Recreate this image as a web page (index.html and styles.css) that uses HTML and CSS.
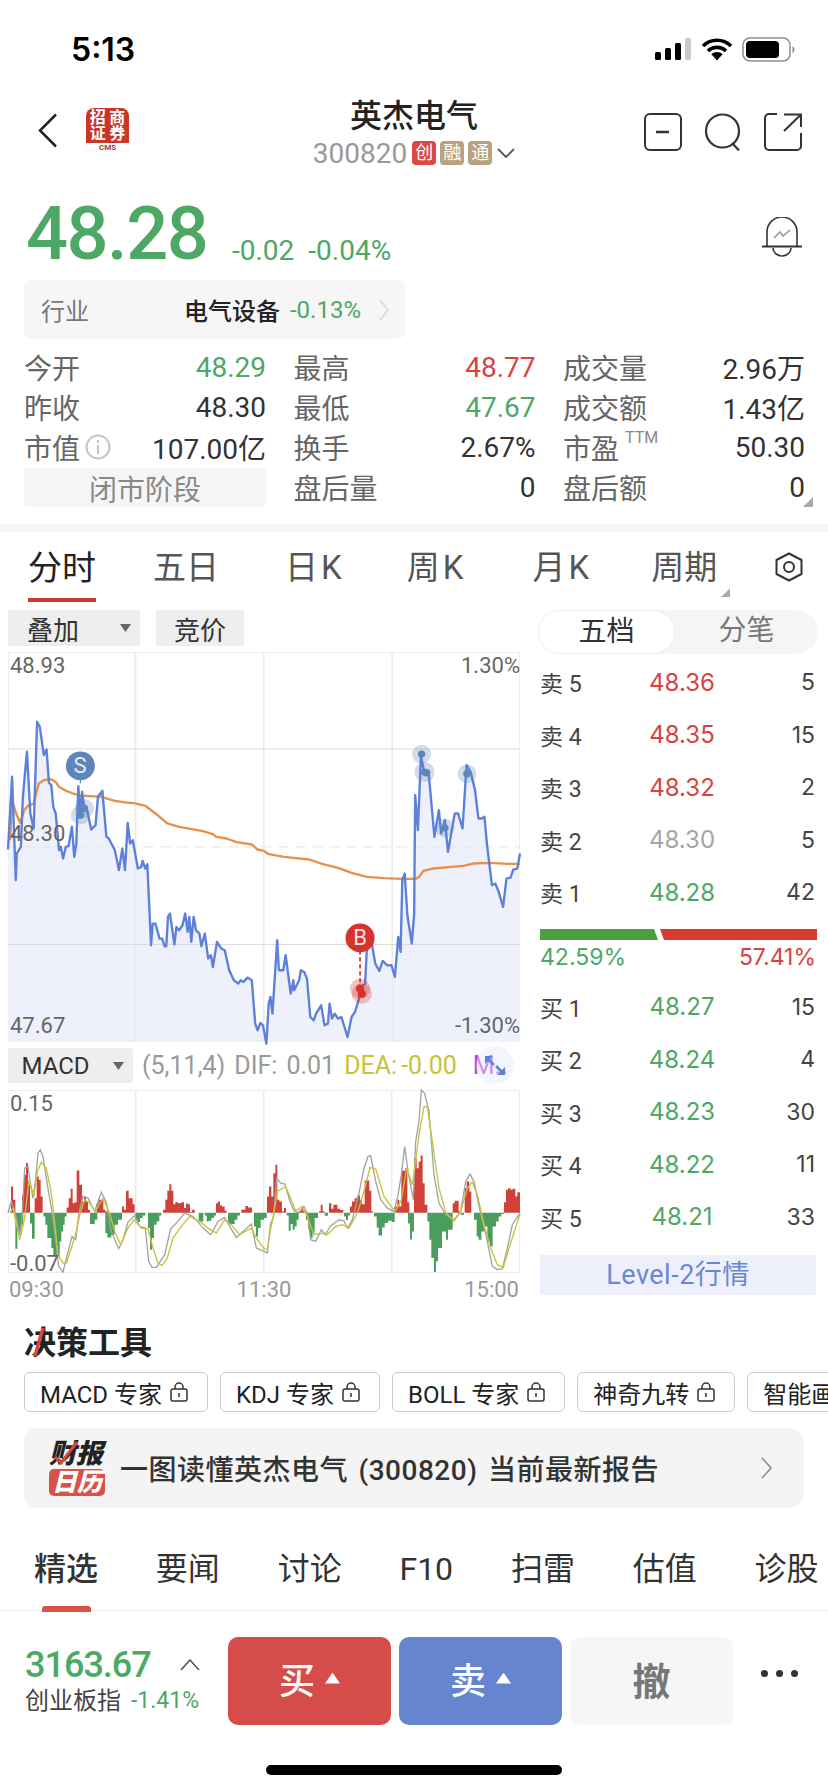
FILE: index.html
```html
<!DOCTYPE html>
<html lang="zh">
<head>
    <meta charset="utf-8">
    <title>英杰电气</title>
    <link rel="stylesheet" href="styles.css">
</head>
<body>
<div class="phone">
    <div class="statusbar">
        <span class="clock">5:13</span>
        <div class="status-icons">
            <svg width="38" height="24" viewBox="0 0 38 24"><rect x="1" y="15" width="6" height="8" rx="1.5" fill="#000"/><rect x="11" y="11" width="6" height="12" rx="1.5" fill="#000"/><rect x="21" y="6" width="6" height="17" rx="1.5" fill="#000"/><rect x="31" y="1" width="6" height="22" rx="1.5" fill="#c9c9c9"/></svg>
            <svg width="32" height="24" viewBox="0 0 32 24"><path d="M2 9a20 20 0 0 1 28 0M7 14a13 13 0 0 1 18 0M11.500 18.500a6.500 6.500 0 0 1 9 0" fill="none" stroke="#000" stroke-width="3.600"/><path d="M12.500 19.500L16 23.500L19.500 19.500a5 5 0 0 0-7 0z" fill="#000"/></svg>
            <svg width="54" height="25" viewBox="0 0 54 25"><rect x="1" y="1" width="47" height="23" rx="7" fill="none" stroke="#8e8e8e" stroke-width="1.500"/><rect x="4" y="4" width="33" height="17" rx="4" fill="#000"/><path d="M50.500 9v7a4 4 0 0 0 0-7z" fill="#8e8e8e"/></svg>
        </div>
    </div>

    <div class="nav">
        <div class="nav-left">
            <svg class="back" width="20" height="35" viewBox="0 0 20 35"><path d="M18 1.500L2 17.500L18 33.500" fill="none" stroke="#222" stroke-width="2.500"/></svg>
            <div class="broker">
                <div class="broker-top"><span>招</span><span>商</span><span>证</span><span>券</span></div>
                <div class="broker-foot">CMS</div>
            </div>
        </div>
        <div class="nav-title">
            <div class="stock-name">英杰电气</div>
            <div class="stock-code">300820<span class="tag tag-red">创</span><span class="tag">融</span><span class="tag">通</span>
                <svg class="code-arrow" width="18" height="10" viewBox="0 0 18 10"><path d="M1 1L9 9L17 1" fill="none" stroke="#555" stroke-width="1.800"/></svg>
            </div>
        </div>
        <div class="nav-icons">
            <svg width="38" height="38" viewBox="0 0 38 38"><rect x="1" y="1" width="36" height="36" rx="5" fill="none" stroke="#333" stroke-width="2"/><path d="M12 19H25" stroke="#333" stroke-width="2.500"/></svg>
            <svg width="38" height="38" viewBox="0 0 38 38"><circle cx="18.500" cy="18" r="16.500" fill="none" stroke="#333" stroke-width="2.200"/><path d="M28 30L35 37.500" stroke="#333" stroke-width="2.200"/></svg>
            <svg width="38" height="38" viewBox="0 0 38 38"><path d="M13 1H5a4 4 0 0 0-4 4v28a4 4 0 0 0 4 4h28a4 4 0 0 0 4-4V20" fill="none" stroke="#333" stroke-width="2"/><path d="M20 1.500H37V14M36.500 2L20 18" fill="none" stroke="#333" stroke-width="2"/></svg>
        </div>
    </div>

    <div class="quote">
        <span class="price">48.28</span>
        <span class="change">-0.02</span>
        <span class="change">-0.04%</span>
        <svg class="bell" width="40" height="40" viewBox="0 0 40 40"><path d="M5 29V15a15 15 0 0 1 30 0V29" fill="none" stroke="#333" stroke-width="1.600"/><path d="M0 29.500H40" stroke="#333" stroke-width="2"/><path d="M11 31a9 8 0 0 0 18 0" fill="none" stroke="#333" stroke-width="1.600"/><path d="M12 21L18 15L21 19L28 13" fill="none" stroke="#999" stroke-width="1.600"/></svg>
    </div>

    <div class="industry">
        <span class="industry-label">行业</span>
        <span class="industry-name">电气设备</span>
        <span class="industry-change">-0.13%</span>
        <svg width="10" height="22" viewBox="0 0 10 22"><path d="M1 1L9 11L1 21" fill="none" stroke="#d6d6d6" stroke-width="1.500"/></svg>
    </div>

    <div class="stats">
        <div class="stat"><span class="stat-label">今开</span><span class="green">48.29</span></div>
        <div class="stat"><span class="stat-label">最高</span><span class="red">48.77</span></div>
        <div class="stat"><span class="stat-label">成交量</span><span>2.96万</span></div>
        <div class="stat"><span class="stat-label">昨收</span><span>48.30</span></div>
        <div class="stat"><span class="stat-label">最低</span><span class="green">47.67</span></div>
        <div class="stat"><span class="stat-label">成交额</span><span>1.43亿</span></div>
        <div class="stat"><span class="stat-label">市值<svg class="info" width="26" height="26" viewBox="0 0 26 26"><circle cx="13" cy="13" r="11.500" fill="none" stroke="#c4c4c4" stroke-width="2"/><path d="M13 11V20" stroke="#c4c4c4" stroke-width="2"/><circle cx="13" cy="7.500" r="1.400" fill="#c4c4c4"/></svg></span><span>107.00亿</span></div>
        <div class="stat"><span class="stat-label">换手</span><span>2.67%</span></div>
        <div class="stat"><span class="stat-label">市盈<sup class="ttm">TTM</sup></span><span>50.30</span></div>
        <div class="stat stat-closed">闭市阶段</div>
        <div class="stat"><span class="stat-label">盘后量</span><span>0</span></div>
        <div class="stat"><span class="stat-label">盘后额</span><span>0</span></div>
        <i class="stats-corner"></i>
    </div>

    <div class="divider"></div>

    <div class="periods">
        <span class="period period-on">分时</span>
        <span class="period">五日</span>
        <span class="period period-k">日K</span>
        <span class="period period-k">周K</span>
        <span class="period period-k">月K</span>
        <span class="period period-more">周期</span>
        <svg width="30" height="30" viewBox="0 0 30 30"><path d="M15 1.500L27.500 8V22L15 28.500L2.500 22V8Z" fill="none" stroke="#333" stroke-width="2" stroke-linejoin="round"/><circle cx="15" cy="15" r="5" fill="none" stroke="#333" stroke-width="2"/></svg>
    </div>

    <div class="market">
        <div class="charts">
            <div class="chart-tools">
                <span class="pick pick-overlay">叠加<i class="caret"></i></span>
                <span class="pick pick-auction">竞价</span>
            </div>

            <div class="price-chart">
                <svg class="plot" viewBox="24 36 1514 1169" preserveAspectRatio="none">
                    <polygon class="price-fill" points="24,1205 24,628 36,410 47,720 50,640 62,620 68,470 80,335 90,520 100,565 110,245 118,260 130,345 138,328 145,428 152,435 158,500 165,520 175,630 180,620 187,655 195,620 203,618 213,560 220,650 226,610 232,438 238,530 243,455 250,505 258,510 270,568 283,555 290,470 303,452 315,590 322,595 340,630 352,690 362,625 370,690 378,548 385,610 393,600 408,685 418,680 422,662 430,685 436,672 447,915 452,850 460,850 472,895 480,895 487,918 492,918 497,830 503,820 516,912 522,860 530,870 540,855 548,820 555,875 560,830 566,905 573,830 580,870 590,880 596,918 606,880 616,955 624,945 630,980 642,905 655,925 665,930 678,990 692,1020 705,1030 712,1020 720,1025 732,1012 745,1020 755,1150 762,1170 770,1148 778,1155 788,1210 795,1090 800,1070 806,1120 820,900 825,990 838,990 845,945 860,1060 868,1020 870,1050 885,1020 890,990 900,995 908,1015 918,1130 928,1140 935,1120 950,1095 960,1155 970,1150 975,1090 982,1135 990,1120 1000,1135 1010,1130 1028,1190 1040,1130 1050,1115 1062,1075 1068,1040 1080,1030 1085,930 1100,910 1110,970 1122,992 1132,962 1145,975 1158,975 1168,1010 1178,890 1185,935 1190,720 1197,700 1205,825 1218,910 1225,820 1228,465 1236,570 1245,350 1255,395 1268,400 1285,590 1298,510 1305,580 1316,540 1325,635 1345,520 1355,520 1368,565 1380,375 1392,395 1405,450 1415,535 1425,535 1433,530 1440,610 1455,735 1465,730 1475,755 1488,800 1498,715 1510,712 1518,688 1530,685 1538,640 1538,1205"/>
                    <g class="grid-major">
                        <path d="M401 36V1205M780 36V1205M1160 36V1205"/>
                    </g>
                    <path class="grid-minor" d="M24 327H1538M24 913H1538"/>
                    <path class="grid-dash" d="M24 620H1538"/>
                    <polyline class="avg-line" points="30,600 36,480 48,520 60,548 72,510 82,498 100,490 115,430 130,420 150,417 165,425 175,440 195,452 215,460 240,467 270,468 300,470 340,482 370,487 400,490 430,497 460,520 495,550 530,560 600,573 630,582 640,590 670,595 700,606 745,613 762,628 780,632 795,642 840,650 915,658 955,672 1000,683 1040,698 1085,710 1135,714 1190,716 1230,716 1240,710 1252,692 1280,685 1370,677 1400,670 1450,668 1500,671 1538,671"/>
                    <polyline class="price-line" points="24,628 36,410 47,720 50,640 62,620 68,470 80,335 90,520 100,565 110,245 118,260 130,345 138,328 145,428 152,435 158,500 165,520 175,630 180,620 187,655 195,620 203,618 213,560 220,650 226,610 232,438 238,530 243,455 250,505 258,510 270,568 283,555 290,470 303,452 315,590 322,595 340,630 352,690 362,625 370,690 378,548 385,610 393,600 408,685 418,680 422,662 430,685 436,672 447,915 452,850 460,850 472,895 480,895 487,918 492,918 497,830 503,820 516,912 522,860 530,870 540,855 548,820 555,875 560,830 566,905 573,830 580,870 590,880 596,918 606,880 616,955 624,945 630,980 642,905 655,925 665,930 678,990 692,1020 705,1030 712,1020 720,1025 732,1012 745,1020 755,1150 762,1170 770,1148 778,1155 788,1210 795,1090 800,1070 806,1120 820,900 825,990 838,990 845,945 860,1060 868,1020 870,1050 885,1020 890,990 900,995 908,1015 918,1130 928,1140 935,1120 950,1095 960,1155 970,1150 975,1090 982,1135 990,1120 1000,1135 1010,1130 1028,1190 1040,1130 1050,1115 1062,1075 1068,1040 1080,1030 1085,930 1100,910 1110,970 1122,992 1132,962 1145,975 1158,975 1168,1010 1178,890 1185,935 1190,720 1197,700 1205,825 1218,910 1225,820 1228,465 1236,570 1245,350 1255,395 1268,400 1285,590 1298,510 1305,580 1316,540 1325,635 1345,520 1355,520 1368,565 1380,375 1392,395 1405,450 1415,535 1425,535 1433,530 1440,610 1455,735 1465,730 1475,755 1488,800 1498,715 1510,712 1518,688 1530,685 1538,640"/>
                    <g class="sell-marks">
                        <circle class="halo" cx="238" cy="525" r="28"/><circle class="halo" cx="250" cy="505" r="28"/>
                        <circle class="halo" cx="1247" cy="342" r="28"/><circle class="halo" cx="1256" cy="396" r="30"/>
                        <circle class="halo" cx="1381" cy="401" r="28"/><circle class="halo" cx="1316" cy="563" r="28"/>
                        <circle cx="238" cy="525" r="11"/><circle cx="250" cy="505" r="11"/><circle cx="1247" cy="342" r="11"/>
                        <circle cx="1256" cy="396" r="11"/><circle cx="1262" cy="398" r="11"/><circle cx="1381" cy="401" r="11"/><circle cx="1316" cy="563" r="11"/>
                        <path d="M238 377V430" stroke="#5f86ba" stroke-width="4"/>
                        <circle cx="238" cy="377" r="43"/>
                    </g>
                    <g class="buy-marks">
                        <circle class="halo" cx="1065" cy="1045" r="30"/><circle class="halo" cx="1070" cy="1060" r="30"/>
                        <circle cx="1065" cy="1045" r="12"/><circle cx="1070" cy="1060" r="12"/>
                        <path d="M1065 930V1040" stroke="#d5332b" stroke-width="5" stroke-dasharray="13 8"/>
                        <circle cx="1065" cy="893" r="43"/>
                    </g>
                </svg>
                <span class="mark-letter mark-s">S</span>
                <span class="mark-letter mark-b">B</span>
                <span class="axis axis-top">48.93</span>
                <span class="axis axis-mid">48.30</span>
                <span class="axis axis-bottom">47.67</span>
                <span class="axis axis-top axis-right">1.30%</span>
                <span class="axis axis-bottom axis-right">-1.30%</span>
            </div>

            <div class="macd-bar">
                <span class="pick pick-macd">MACD<i class="caret"></i></span>
                <span class="macd-param">(5,11,4)</span>
                <span class="macd-param">DIF:</span>
                <span class="macd-param">0.01</span>
                <span class="macd-dea">DEA:</span>
                <span class="macd-dea macd-dea-value">-0.00</span>
                <span class="macd-m">M..</span>
                <svg class="expand" width="38" height="38" viewBox="0 0 38 38"><circle cx="19" cy="19" r="19" fill="#e4e9f9" fill-opacity=".45"/><path d="M9 10H17L9 18ZM29 29H21L29 21Z" fill="#5f80dd"/><path d="M12 13L18 19M26 26L20 20" stroke="#5f80dd" stroke-width="2.500"/></svg>
            </div>

            <div class="macd-chart">
                <svg class="plot" viewBox="0 15 1536 550" preserveAspectRatio="none">
                    <path class="grid-major" d="M383 15V565M767 15V565M1151 15V565"/>
                    <g class="bars-red">
                        <path d="M9 384V305H15V345H22V384ZM42 384V330H48V270H54V235H60V300H66V384ZM80 384V340H86V275H92V285H98V335H104V384ZM176 384V368H182V340H188V312H194V355H200V352H206V257H214V300H222V350H228V335H234V350H240V375H246V384ZM266 384V355H272V345H286V375H292V380H300V384ZM342 384V365H348V375H354V318H362V340H374V358H380V384ZM465 384V375H472V345H478V318H484V298H490V318H496V358H502V352H510V355H520V352H528V370H534V356H540V358H546V382H552V375H560V384ZM624 384V355H630V350H636V362H642V365H650V378H656V384ZM700 384V375H712V364H720V368H732V384Z"/>
                        <path transform="translate(768 0)" d="M9 384V335H15V305H22V335H28V265H34V240H40V345H46V350H54V380H60V370H66V384ZM104 384V378H110V372H118V380H128V384ZM164 384V380H170V360H176V380H182V384ZM195 384V355H202V372H208V360H220V372H228V376H238V384ZM258 384V365H264V350H272V340H280V332H288V345H294V358H302V287H316V318H322V380H328V384ZM392 384V365H400V345H406V365H412V258H424V250H430V352H436V384ZM450 384V220H458V250H464V230H470V212H476V295H482V360H490V384ZM566 384V355H572V348H584V380H590V384ZM602 384V310H608V290H616V320H622V384ZM720 384V352H726V315H732V310H740V315H746V312H754V335H760V322H768V384Z"/>
                    </g>
                    <g class="bars-green">
                        <path d="M22 384V492H28V440H34V450H40V420H46V384ZM66 384V416H72V462H80V384ZM106 384V395H112V420H118V460H130V490H136V515H155V470H160V440H165V420H170V395H176V384ZM246 384V418H260V405H268V384ZM292 384V445H298V458H310V450H320V420H330V405H342V384ZM382 384V405H388V412H396V400H404V392H412V384ZM420 384V430H426V495H432V460H438V420H446V410H454V392H460V384ZM572 384V410H586V384ZM590 384V392H596V410H602V408H610V400H618V392H624V384ZM660 384V418H680V405H688V392H696V384ZM738 384V425H744V455H750V430H758V405H768V384Z"/>
                        <path transform="translate(768 0)" d="M0 384V400H8V384ZM68 384V392H74V438H80V418H86V435H92V425H98V405H104V384ZM126 384V405H132V432H138V460H146V445H152V400H162V384ZM182 384V393H192V384ZM240 384V395H246V406H252V392H258V384ZM330 384V395H338V428H344V452H354V428H362V415H372V408H384V412H392V384ZM432 384V416H438V464H444V440H450V384ZM490 384V410H496V465H502V520H510V562H516V530H522V490H534V440H546V465H552V435H566V384ZM590 384V390H600V384ZM630 384V405H638V455H644V465H652V440H660V425H670V470H678V485H686V425H696V410H704V395H712V388H720V384Z"/>
                    </g>
                    <polyline class="dif-line" points="0,384 10,350 20,380 36,450 42,400 50,250 60,245 68,300 75,340 82,290 90,205 97,195 105,215 118,300 130,370 140,440 152,545 165,562 178,510 192,455 203,465 213,385 225,335 240,340 260,380 280,322 295,352 310,440 332,492 345,465 360,412 380,392 395,425 412,430 422,530 432,548 445,548 470,510 488,432 510,410 530,385 555,395 570,412 585,430 608,450 630,410 650,398 665,425 685,458 705,440 730,418 745,490 768,500 778,505 788,415 796,400 806,280 818,295 831,298 846,350 858,378 873,385 888,365 898,385 908,465 923,470 940,435 953,450 966,425 993,405 1008,408 1018,430 1033,405 1053,325 1068,250 1080,215 1088,212 1103,290 1118,345 1138,370 1158,380 1170,330 1180,270 1190,185 1200,260 1216,345 1223,170 1233,110 1240,15 1250,25 1263,80 1278,270 1293,355 1313,390 1338,405 1358,380 1373,290 1386,268 1398,290 1413,365 1438,470 1453,545 1468,555 1483,553 1498,490 1513,420 1536,384"/>
                    <polyline class="dea-line" points="5,384 15,370 35,465 50,400 62,292 78,330 88,260 100,232 115,250 130,325 145,460 150,510 165,535 175,535 190,490 205,440 215,390 230,345 245,355 262,380 285,340 305,385 320,440 338,480 360,430 378,405 400,430 420,432 435,490 450,535 462,542 478,520 495,460 520,425 545,395 575,410 600,430 625,445 650,405 670,420 695,450 730,430 745,460 768,492 778,495 790,420 798,385 808,320 833,305 848,340 863,378 883,365 898,395 918,450 938,445 958,450 983,425 1003,420 1023,430 1048,385 1068,320 1086,248 1103,252 1128,335 1153,370 1163,378 1180,345 1196,250 1213,300 1220,250 1233,150 1248,65 1258,65 1273,170 1293,310 1313,382 1338,410 1358,380 1378,310 1393,292 1408,330 1428,420 1448,490 1468,540 1486,548 1503,490 1536,388"/>
                </svg>
                <span class="axis axis-macd-top">0.15</span>
                <span class="axis axis-macd-bottom">-0.07</span>
            </div>

            <div class="times"><span>09:30</span><span>11:30</span><span>15:00</span></div>
        </div>

        <div class="book">
            <div class="segment"><span class="segment-on">五档</span><span class="segment-off">分笔</span></div>
            <div class="book-rows">
                <div class="book-row"><span>卖 5</span><span class="red">48.36</span><span>5</span></div>
                <div class="book-row"><span>卖 4</span><span class="red">48.35</span><span>15</span></div>
                <div class="book-row"><span>卖 3</span><span class="red">48.32</span><span>2</span></div>
                <div class="book-row"><span>卖 2</span><span class="gray">48.30</span><span>5</span></div>
                <div class="book-row"><span>卖 1</span><span class="green">48.28</span><span>42</span></div>
            </div>
            <div class="ratio"><i class="ratio-green"></i><i class="ratio-red"></i></div>
            <div class="ratio-text"><span class="green">42.59%</span><span class="red">57.41%</span></div>
            <div class="book-rows">
                <div class="book-row"><span>买 1</span><span class="green">48.27</span><span>15</span></div>
                <div class="book-row"><span>买 2</span><span class="green">48.24</span><span>4</span></div>
                <div class="book-row"><span>买 3</span><span class="green">48.23</span><span>30</span></div>
                <div class="book-row"><span>买 4</span><span class="green">48.22</span><span>11</span></div>
                <div class="book-row"><span>买 5</span><span class="green">48.21</span><span>33</span></div>
            </div>
            <div class="level2">Level-2行情</div>
        </div>
    </div>

    <div class="tools">
        <h2 class="tools-title">决策工具<svg class="title-slash" width="12" height="30" viewBox="0 0 12 30"><path d="M10 1L2 29" stroke="#d9473f" stroke-width="3.500"/></svg></h2>
        <div class="chips">
            <span class="chip">MACD 专家<svg class="lock" width="18" height="20" viewBox="0 0 18 20"><use href="#lock"/></svg></span>
            <span class="chip">KDJ 专家<svg class="lock" width="18" height="20" viewBox="0 0 18 20"><use href="#lock"/></svg></span>
            <span class="chip">BOLL 专家<svg class="lock" width="18" height="20" viewBox="0 0 18 20"><use href="#lock"/></svg></span>
            <span class="chip">神奇九转<svg class="lock" width="18" height="20" viewBox="0 0 18 20"><use href="#lock"/></svg></span>
            <span class="chip">智能画线</span>
        </div>
        <svg class="sprite" width="0" height="0"><defs><g id="lock"><rect x="1" y="7" width="16" height="12" rx="2" fill="none" stroke="#333" stroke-width="1.500"/><path d="M5 7V5a4 4 0 0 1 8 0V7" fill="none" stroke="#333" stroke-width="1.500"/><path d="M9 11V15" stroke="#333" stroke-width="1.500"/></g></defs></svg>
        <div class="report">
            <div class="report-logo">
                <span class="report-top">财报<svg class="report-tick" width="26" height="26" viewBox="0 0 26 26"><path d="M2 17L8 23L24 2" fill="none" stroke="#d9473f" stroke-width="3"/></svg></span>
                <span class="report-box">日历</span>
            </div>
            <span class="report-text">一图读懂英杰电气 (300820) 当前最新报告</span>
            <svg width="12" height="22" viewBox="0 0 12 22"><path d="M1 1L10 11L1 21" fill="none" stroke="#888" stroke-width="1.500"/></svg>
        </div>
    </div>

    <div class="news-tabs">
        <span class="news-tab news-on">精选</span>
        <span class="news-tab">要闻</span>
        <span class="news-tab">讨论</span>
        <span class="news-tab">F10</span>
        <span class="news-tab">扫雷</span>
        <span class="news-tab">估值</span>
        <span class="news-tab">诊股</span>
    </div>

    <div class="trade">
        <div class="index">
            <div class="index-top"><span class="index-value">3163.67</span><svg width="20" height="12" viewBox="0 0 20 12"><path d="M1 11L10 1L19 11" fill="none" stroke="#555" stroke-width="1.600"/></svg></div>
            <div class="index-bottom">创业板指<span class="index-change">-1.41%</span></div>
        </div>
        <div class="trade-btn btn-buy">买<i class="btn-up"></i></div>
        <div class="trade-btn btn-sell">卖<i class="btn-up"></i></div>
        <div class="trade-btn btn-cancel">撤</div>
        <div class="more"><i></i><i></i><i></i></div>
    </div>

    <div class="home-bar"></div>
</div>
</body>
</html>
```
FILE: styles.css
```css
/* stock detail screen */
:root {
    --green: #4da765;
    --red: #d8433f;
    --gray: #a5a5a5;
    --text: #333;
    --label: #666;
    --panel: #f5f5f5;
}
* { box-sizing: border-box; }
body { margin: 0; background: #fff; color: var(--text); font-family: Roboto, "Noto Sans CJK SC", sans-serif; }
i { display: block; }
.phone { width: 828px; height: 1792px; overflow: hidden; }
.green { color: var(--green); }
.red { color: var(--red); }
.gray { color: var(--gray); }

.statusbar { height: 84px; display: flex; justify-content: space-between; padding: 36px 32px 0 71px; }
.clock { font: 600 32px/28px Inter, sans-serif; color: #000; }
.status-icons { display: flex; gap: 9px; height: 26px; align-items: center; }

.nav { height: 92px; position: relative; display: flex; justify-content: space-between; padding: 24px 26px 0 38px; }
.nav-left { display: flex; align-items: center; gap: 28px; height: 44px; }
.broker { width: 43px; height: 44px; border-radius: 8px; overflow: hidden; background: #fff; box-shadow: 0 0 1px #ccc; }
.broker-top { height: 35px; background: #c8352b; display: grid; grid-template-columns: 1fr 1fr; color: #fff; font-size: 16px; line-height: 16px; font-weight: 700; text-align: center; padding: 2px 2px; }
.broker-foot { font-size: 8px; line-height: 9px; font-weight: 700; color: #b5352c; text-align: center; }
.nav-title { position: absolute; left: 0; right: 0; top: 12px; text-align: center; }
.stock-name { font-size: 32px; line-height: 40px; font-weight: 500; color: #222; }
.stock-code { display: flex; align-items: center; justify-content: center; height: 26px; margin-top: 4px; font-size: 28px; color: #999; }
.tag { width: 24px; height: 24px; margin-left: 4px; border-radius: 4px; background: #b9a27e; color: #fff; font-size: 18px; line-height: 24px; text-align: center; }
.tag:first-of-type { margin-left: 5px; }
.tag-red { background: #d94a45; }
.code-arrow { margin-left: 5px; }
.nav-icons { display: flex; gap: 22px; margin-top: 5px; height: 38px; }

.quote { height: 104px; display: flex; align-items: flex-end; padding: 0 26px 9px; position: relative; }
.price { font-size: 74px; line-height: 75px; font-weight: 500; color: var(--green); letter-spacing: -1.500px; width: 206px; }
.change { font-size: 28px; line-height: 32px; color: var(--green); margin-right: 14px; margin-bottom: 4px; }
.bell { position: absolute; left: 762px; top: 41px; }

.industry { width: 381px; height: 59px; margin-left: 24px; background: #f6f6f6; border-radius: 8px; display: flex; align-items: center; padding: 0 16px 0 17px; font-size: 24px; }
.industry-label { color: #777; flex: 1; }
.industry-name { color: #222; font-weight: 500; }
.industry-change { color: var(--green); font-size: 24px; margin: 0 18px 0 10px; }

.stats { display: grid; grid-template-columns: repeat(3, 242px); column-gap: 27.500px; grid-auto-rows: 40px; margin: 8px 0 0 24px; position: relative; font-size: 28px; }
.stat { display: flex; justify-content: space-between; align-items: center; }
.stat-label { color: var(--label); display: flex; align-items: center; position: relative; }
.info { margin-left: 5px; }
.ttm { position: absolute; left: 62px; top: 1px; font-size: 16px; line-height: 20px; color: #888; }
.stat-closed { height: 39px; justify-content: center; background: var(--panel); border-radius: 4px; color: #888; align-self: end; }
.stats-corner { position: absolute; left: 779px; top: 150px; width: 10px; height: 10px; background: #aaa; clip-path: polygon(100% 0, 100% 100%, 0 100%); }

.divider { height: 8px; margin-top: 17px; background: var(--panel); }

.periods { height: 70px; display: flex; align-items: center; position: relative; padding: 0 23px 0 28px; font-size: 33px; color: #555; }
.period { margin-right: 66px; height: 70px; line-height: 72px; position: relative; }
.period-on { color: #222; font-size: 34px; margin-right: 57px; }
.period-on::after { content: ""; position: absolute; left: 0; right: 0; bottom: 0; height: 4px; background: #cc3a33; }
.period-k { letter-spacing: 3px; }
.period:nth-child(3) { margin-right: 62px; }
.period:nth-child(4) { margin-right: 66px; }
.period:nth-child(5) { margin-right: 59px; }
.period-more { margin-right: 57px; }
.period-more::after { content: ""; position: absolute; right: -13px; bottom: 5px; width: 9px; height: 9px; background: #aaa; clip-path: polygon(100% 0, 100% 100%, 0 100%); }

.market { display: flex; padding: 8px 0 0 8px; }
.charts { width: 512px; }
.chart-tools { display: flex; gap: 16px; height: 36px; }
.pick { display: flex; align-items: center; justify-content: center; height: 36px; background: #eee; border-radius: 3px; font-size: 26px; color: #333; position: relative; }
.pick-overlay { width: 132px; padding-right: 42px; }
.pick-auction { width: 88px; }
.pick-macd { width: 125px; height: 35px; padding: 0 30px 0 0; font-size: 24px; }
.caret { position: absolute; right: 9px; top: 14px; width: 11px; height: 8px; background: #666; clip-path: polygon(0 0, 100% 0, 50% 100%); }

.price-chart { height: 390px; margin-top: 6px; position: relative; border: 1px solid #eee; }
.plot { display: block; position: absolute; left: -1px; top: -1px; width: calc(100% + 2px); height: calc(100% + 2px); overflow: visible; }
.price-fill { fill: #eef1fb; }
.grid-major path, path.grid-major { fill: none; stroke: #ebebeb; stroke-width: 5; }
.grid-minor { fill: none; stroke: #dcdcdc; stroke-width: 3; }
.grid-dash { fill: none; stroke: #e8e8e8; stroke-width: 4; stroke-dasharray: 30 20; }
.avg-line { fill: none; stroke: #e8904a; stroke-width: 7; stroke-linejoin: round; }
.price-line { fill: none; stroke: #5d80da; stroke-width: 7; stroke-linejoin: round; }
.sell-marks circle { fill: #5f86ba; }
.buy-marks circle { fill: #d5332b; }
.sell-marks .halo, .buy-marks .halo { fill-opacity: .28; }
.mark-letter { position: absolute; width: 28px; text-align: center; font-size: 22px; line-height: 28px; color: #fff; opacity: .85; }
.mark-s { left: 57px; top: 99px; }
.mark-b { left: 337px; top: 271px; }
.axis { position: absolute; left: 1px; font-size: 22px; line-height: 26px; color: #666; }
.axis-right { left: auto; right: -1px; }
.axis-top { top: 0; }
.axis-mid { top: 168px; }
.axis-bottom { top: 360px; }
.axis-macd-top { top: 0; }
.axis-macd-bottom { top: 160px; }

.macd-bar { height: 35px; margin-top: 6px; display: flex; align-items: center; gap: 9px; position: relative; font-size: 25px; color: #999; white-space: nowrap; }
.macd-param:first-of-type { margin-left: 8px; }
.macd-dea { color: #c9c23a; }
.macd-dea:first-of-type { margin-left: 1px; }
.macd-dea-value { margin-left: -5px; }
.macd-m { color: #c040e0; margin-left: 7px; }
.expand { position: absolute; left: 468px; top: -2px; }

.macd-chart { height: 183px; margin-top: 7px; position: relative; border: 1px solid #eee; }
.bars-red { fill: #d0413a; }
.bars-green { fill: #4a9d5c; }
.dif-line { fill: none; stroke: #a3a3a3; stroke-width: 4; }
.dea-line { fill: none; stroke: #c9c23a; stroke-width: 4; }
.times { display: flex; justify-content: space-between; height: 32px; padding: 2px 1px 0; font-size: 22px; line-height: 30px; color: #999; }

.book { width: 280px; margin-left: 18px; font-size: 23px; }
.segment { height: 44px; display: flex; background: var(--panel); border-radius: 22px; font-size: 28px; line-height: 42px; text-align: center; }
.segment-on { width: 137px; background: #fff; border: 1px solid #eee; border-radius: 22px; color: #333; }
.segment-off { flex: 1; color: #777; }
.book-rows { padding: 2px 0 0 2px; }
.book-row { height: 52.500px; display: grid; grid-template-columns: 80px 124px 1fr; align-items: center; color: #444; }
.book-row span:nth-child(2) { text-align: center; font-family: Inter, sans-serif; font-size: 24px; }
.book-row span:nth-child(3) { text-align: right; padding-right: 3px; font-family: Inter, sans-serif; }
.ratio { display: flex; height: 11px; width: 277px; margin: 10.500px 0 0 2px; }
.ratio-green { width: 118px; background: #4aa03f; clip-path: polygon(0 0, calc(100% - 4px) 0, 100% 100%, 0 100%); }
.ratio-red { flex: 1; margin-left: 2px; background: #d73c30; clip-path: polygon(0 0, 100% 0, 100% 100%, 4px 100%); }
.ratio-text { display: flex; justify-content: space-between; padding: 4px 2px 0 2px; line-height: 27px; font-family: Inter, sans-serif; font-size: 23px; margin-bottom: 7.700px; }
.level2 { height: 40px; margin: 12px 2px 0 2px; background: #edf0fa; color: #6b87d1; text-align: center; line-height: 40px; font-size: 27px; letter-spacing: .5px; }

.tools { padding: 22px 0 0 24px; }
.tools-title { margin: 0; font-size: 32px; line-height: 32px; font-weight: 700; color: #222; position: relative; }
.title-slash { position: absolute; left: 9px; top: 0; }
.chips { display: flex; gap: 12px; margin-top: 13px; white-space: nowrap; }
.chip { height: 40px; display: flex; align-items: center; padding: 0 19px 0 15px; border: 1px solid #ccc; border-radius: 6px; font-size: 24px; color: #222; }
.lock { margin-left: 8px; }
.sprite { position: absolute; }
.report { width: 780px; height: 80px; margin-top: 16px; background: #f4f4f4; border-radius: 14px; display: flex; align-items: center; padding: 0 31px 0 25px; }
.report-logo { width: 56px; display: flex; flex-direction: column; position: relative; font-style: italic; font-weight: 900; }
.report-top { font-size: 27px; line-height: 29px; color: #222; position: relative; white-space: nowrap; }
.report-tick { position: absolute; left: 4px; top: 0; }
.report-box { height: 27px; background: #d9514d; border-radius: 5px; color: #fff; font-size: 25px; line-height: 27px; text-align: center; white-space: nowrap; }
.report-text { flex: 1; margin-left: 15px; font-size: 28px; font-weight: 500; color: #333; letter-spacing: .5px; word-spacing: 3px; white-space: nowrap; }

.news-tabs { height: 103px; padding: 3px 0 0 34px; display: flex; gap: 57.800px; font-size: 32px; line-height: 116px; color: #333; border-bottom: 1px solid #eee; white-space: nowrap; }
.news-tab { position: relative; height: 101px; }
.news-on { font-weight: 500; }
.news-on::after { content: ""; position: absolute; left: 8px; right: 7px; bottom: 0; height: 6px; border-radius: 3px 3px 0 0; background: #d9514d; }

.trade { display: flex; height: 88px; margin-top: 26px; padding-left: 25px; position: relative; }
.index { width: 203px; }
.index-top { display: flex; align-items: center; height: 56px; gap: 29px; }
.index-value { font-size: 36px; font-weight: 500; color: var(--green); letter-spacing: -1px; }
.index-bottom { margin-top: -7px; font-size: 24px; color: #444; line-height: 30px; display: flex; align-items: center; }
.index-change { margin-left: 10px; font-size: 23px; color: var(--green); }
.trade-btn { width: 163px; margin-right: 8px; border-radius: 10px; display: flex; align-items: center; justify-content: center; gap: 10px; color: #fff; font-size: 36px; font-weight: 500; padding-bottom: 6px; }
.btn-buy { background: #d64c4a; }
.btn-sell { background: #6585cf; }
.btn-cancel { background: #f6f6f6; color: #777; font-weight: 700; font-size: 38px; }
.btn-up { width: 15px; height: 11px; background: #fff; clip-path: polygon(50% 0, 100% 100%, 0 100%); }
.more { display: flex; gap: 8px; margin-left: 20px; align-items: center; height: 72px; }
.more i { width: 7px; height: 7px; border-radius: 50%; background: #333; }

.home-bar { width: 296px; height: 10px; margin: 40px 0 0 266px; background: #000; border-radius: 5px; }
```
